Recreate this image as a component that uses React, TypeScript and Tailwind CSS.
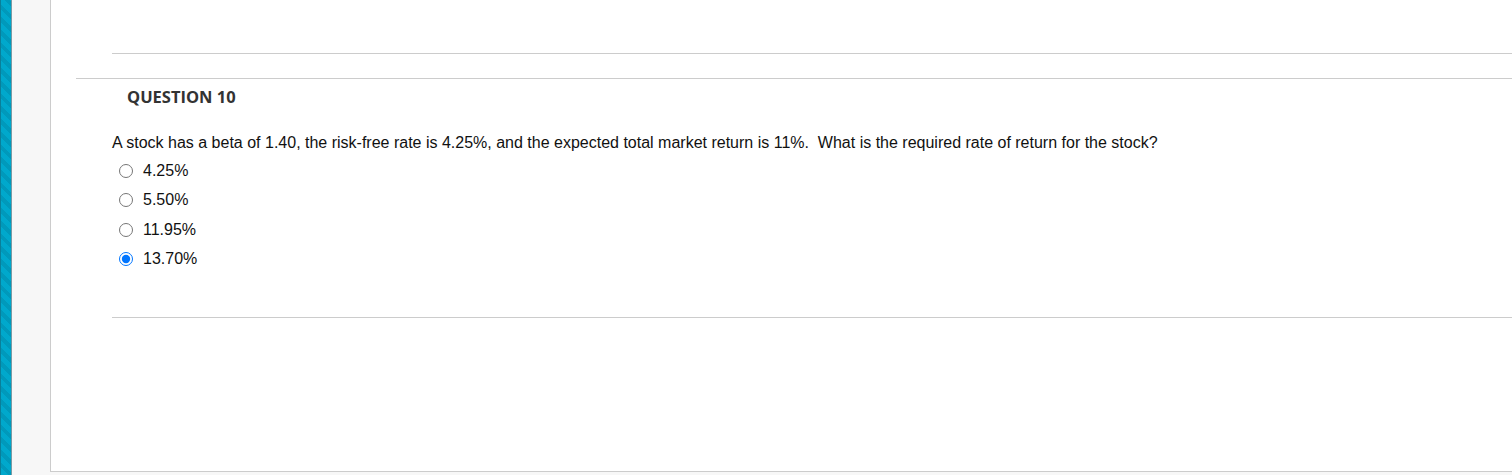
import React from "react";

const options = ["4.25%", "5.50%", "11.95%", "13.70%"];

const App = () => {
  return (
    <div className="flex h-[475px] w-[1512px] overflow-hidden bg-[#f7f7f7]">
      <div className="w-[12px] shrink-0 border-x border-l-[#0a7f99] border-r-[#7a9aa3] bg-[repeating-linear-gradient(45deg,#00a8cc_0px,#00a8cc_5px,#0099bb_5px,#0099bb_9px)]" />
      <div className="w-[38px] shrink-0" />
      <div className="flex h-[472px] flex-1 flex-col border-b border-l border-[#cccccc] bg-white">
        <div className="ml-[61px] mt-[53px] border-t border-[#cccccc]" />
        <div className="ml-[25px] mt-[24px] border-t border-[#cccccc]" />
        <div className="ml-[61px] pt-[8px]">
          <h2
            className="pl-[15px] text-[16.5px] font-bold leading-[20px] text-[#333333]"
            style={{ fontFamily: '"Open Sans", sans-serif' }}
          >
            QUESTION 10
          </h2>
          <div
            className="mt-[27px] text-[16px] leading-[18px] text-[#111111]"
            style={{ fontFamily: '"Liberation Sans", Arial, sans-serif' }}
          >
            <p>
              A stock has a beta of 1.40, the risk-free rate is 4.25%, and the
              expected total market return is 11%.&nbsp; What is the required
              rate of return for the stock?
            </p>
            <ul className="mt-[10px] flex flex-col gap-[11.3px] pl-[6.5px]">
              {options.map((o, i) => (
                <li key={o} className="flex items-center gap-[10.5px]">
                  <input
                    type="radio"
                    name="q10"
                    defaultChecked={i === 3}
                    className="m-0 h-[14px] w-[14px]"
                  />
                  <span>{o}</span>
                </li>
              ))}
            </ul>
          </div>
          <div className="mt-[49px] border-t border-[#cccccc]" />
        </div>
      </div>
    </div>
  );
};

export default App;
